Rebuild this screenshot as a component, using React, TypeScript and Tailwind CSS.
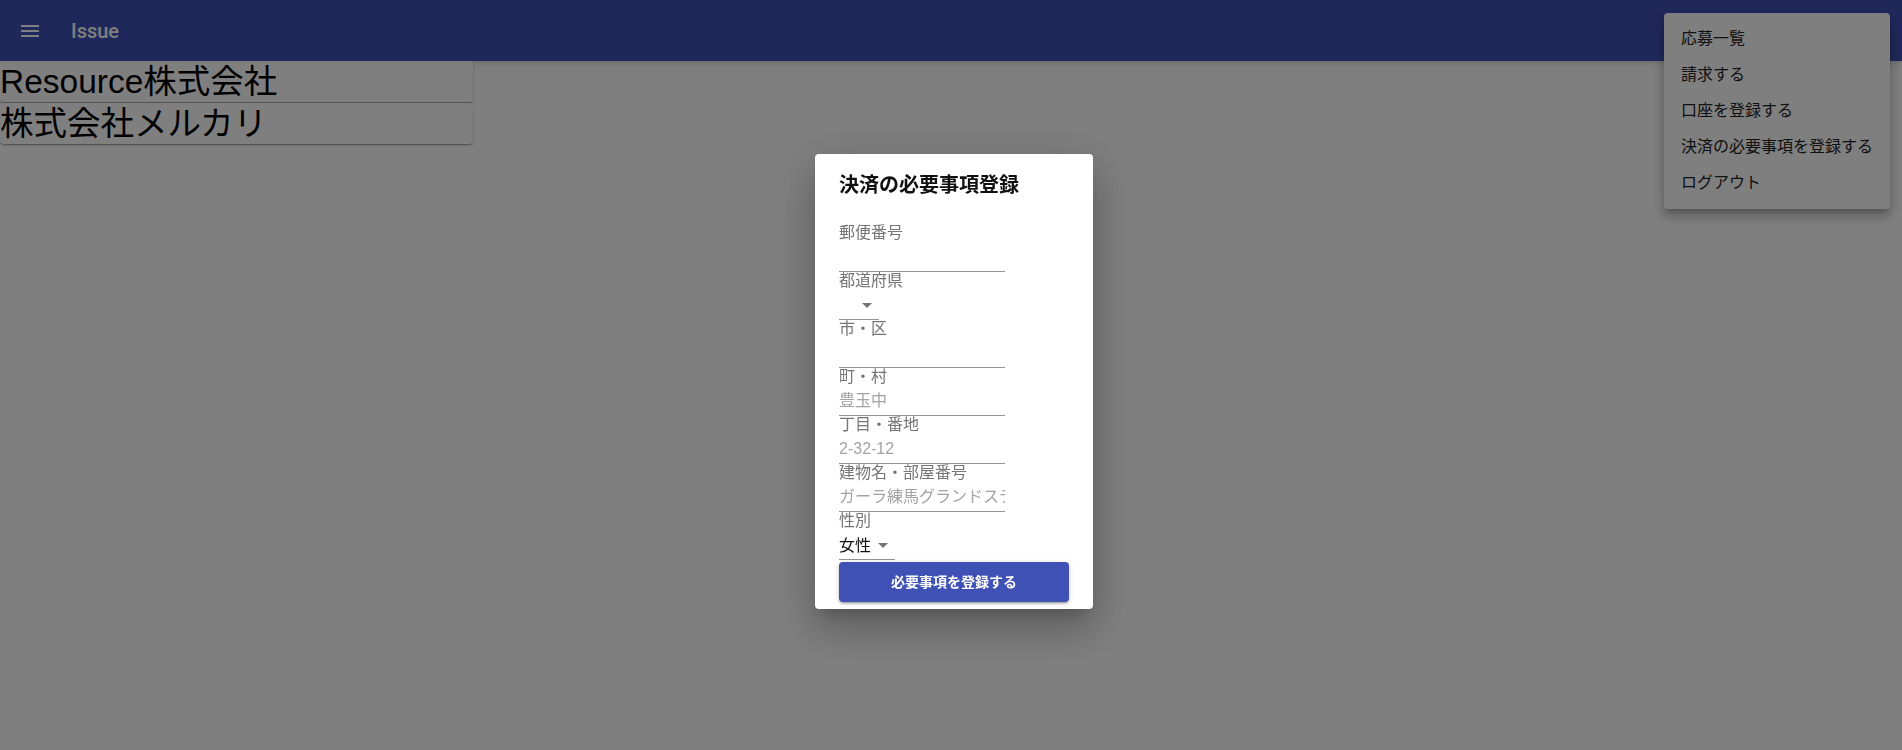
import React from 'react';

const jp = { fontFamily: '"Liberation Sans", "Noto Sans CJK JP", sans-serif' };

function MenuIcon() {
  return (
    <svg viewBox="0 0 24 24" className="h-6 w-6" fill="currentColor">
      <path d="M3 18h18v-2H3v2zm0-5h18v-2H3v2zm0-7v2h18V6H3z" />
    </svg>
  );
}

function Arrow() {
  return (
    <svg viewBox="0 0 24 24" className="h-6 w-6 text-[#757575]" fill="currentColor">
      <path d="M7 10l5 5 5-5z" />
    </svg>
  );
}

function TextField({ label, placeholder }: { label: string; placeholder?: string }) {
  return (
    <div className="flex flex-col">
      <label className="text-[16px] leading-[18px] text-[#757575]">{label}</label>
      <input
        className="h-[30px] w-[166px] border-b border-[#949494] bg-transparent pt-px text-[16px] text-[#222] outline-none placeholder:text-[#a3a3a3]"
        style={jp}
        placeholder={placeholder}
      />
    </div>
  );
}

function SelectField({ label, value }: { label: string; value?: string }) {
  return (
    <div className="flex flex-col">
      <label className="text-[16px] leading-[18px] text-[#757575]">{label}</label>
      <div className="flex h-[30px] w-fit items-center border-b border-[#949494] pt-px">
        <span className="min-w-[16px] text-[16px] leading-[19px] text-[#111]">{value}</span>
        <Arrow />
      </div>
    </div>
  );
}

const menuItems = ['応募一覧', '請求する', '口座を登録する', '決済の必要事項を登録する', 'ログアウト'];

export default function App() {
  return (
    <div className="relative h-[750px] w-full overflow-hidden bg-white" style={jp}>
      {/* App bar */}
      <header className="flex h-[61px] items-center bg-[#3f51b5] text-white shadow-md">
        <div className="ml-[18px] flex h-6 w-6 items-center justify-center">
          <MenuIcon />
        </div>
        <span className="ml-[29px] text-[20px] font-medium" style={{ fontFamily: 'Roboto, sans-serif' }}>
          Issue
        </span>
      </header>

      {/* Company list */}
      <div className="flex w-[473px] flex-col gap-px">
        {['Resource株式会社', '株式会社メルカリ'].map((name) => (
          <div key={name} className="h-[41px] rounded-[4px] bg-white text-[33.5px] leading-[41px] text-black shadow-[0_1px_3px_rgba(0,0,0,0.2),0_1px_1px_rgba(0,0,0,0.14),0_2px_1px_-1px_rgba(0,0,0,0.12)]">
            {name}
          </div>
        ))}
      </div>

      {/* Menu popover */}
      <div className="absolute left-[1664px] top-[13px] w-[226px] rounded-[4px] bg-white py-2 shadow-[0_5px_5px_-3px_rgba(0,0,0,0.2),0_8px_10px_1px_rgba(0,0,0,0.14),0_3px_14px_2px_rgba(0,0,0,0.12)]">
        {menuItems.map((item) => (
          <div key={item} className="flex h-9 items-center pl-[17px] text-[16px] text-[#222]">
            {item}
          </div>
        ))}
      </div>

      {/* Backdrop + dialog */}
      <div className="fixed inset-0 flex items-center justify-center bg-black/50 pl-[6px] pt-[13px]">
        <div className="flex w-[278px] flex-col rounded-[4px] bg-white px-6 pb-[7px] pt-[19px] shadow-[0_11px_15px_-7px_rgba(0,0,0,0.2),0_24px_38px_3px_rgba(0,0,0,0.14),0_9px_46px_8px_rgba(0,0,0,0.12)]">
          <h2 className="mb-[27px] text-[20px] font-semibold leading-[24px] text-[#111]">決済の必要事項登録</h2>
          <TextField label="郵便番号" />
          <SelectField label="都道府県" />
          <TextField label="市・区" />
          <TextField label="町・村" placeholder="豊玉中" />
          <TextField label="丁目・番地" placeholder="2-32-12" />
          <TextField label="建物名・部屋番号" placeholder="ガーラ練馬グランドステージ" />
          <SelectField label="性別" value="女性" />
          <button className="mt-[2px] h-10 w-[230px] rounded-[4px] bg-[#3f51b5] text-[14px] font-bold text-white shadow-[0_1px_5px_rgba(0,0,0,0.2),0_2px_2px_rgba(0,0,0,0.14),0_3px_1px_-2px_rgba(0,0,0,0.12)]">
            必要事項を登録する
          </button>
        </div>
      </div>
    </div>
  );
}
